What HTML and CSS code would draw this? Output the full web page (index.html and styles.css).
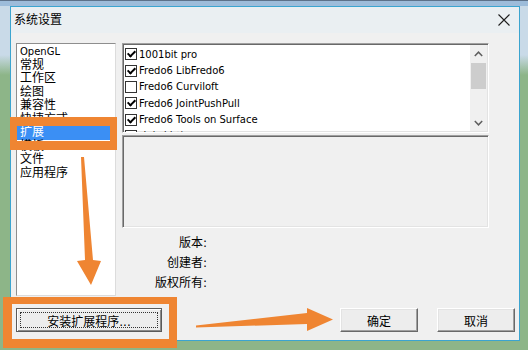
FILE: index.html
```html
<!DOCTYPE html>
<html lang="zh-CN">
<head>
  <meta charset="UTF-8">
  <title>系统设置</title>
  <link rel="stylesheet" href="styles.css">
</head>
<body>
  <div class="dialog">
    <div class="titlebar">
      <span class="title">系统设置</span>
      <svg class="close" width="12" height="12" viewBox="0 0 12 12"><path d="M0.5 0.5L11.5 11.5M11.5 0.5L0.5 11.5" stroke="#1e1e1e" stroke-width="1.1" fill="none"/></svg>
    </div>

    <div class="content">
      <div class="main">
        <ul class="pages">
          <li class="lat">OpenGL</li>
          <li>常规</li>
          <li>工作区</li>
          <li>绘图</li>
          <li>兼容性</li>
          <li>快捷方式</li>
          <li class="sel">扩展</li>
          <li>模板</li>
          <li>文件</li>
          <li>应用程序</li>
        </ul>

        <div class="right">
          <div class="extlist">
            <ul class="items">
              <li><span class="cb on"></span>1001bit pro</li>
              <li><span class="cb on"></span>Fredo6 LibFredo6</li>
              <li><span class="cb"></span>Fredo6 Curviloft</li>
              <li><span class="cb on"></span>Fredo6 JointPushPull</li>
              <li><span class="cb on"></span>Fredo6 Tools on Surface</li>
              <li><span class="cb on"></span>高级镜头工具</li>
            </ul>
            <div class="scroll">
              <div class="sbtn"><svg width="9" height="6" viewBox="0 0 9 6"><path d="M0.8 5L4.5 1.2L8.2 5" stroke="#5f5f5f" stroke-width="1.5" fill="none"/></svg></div>
              <div class="track"><div class="thumb"></div></div>
              <div class="sbtn"><svg width="9" height="6" viewBox="0 0 9 6"><path d="M0.8 1L4.5 4.8L8.2 1" stroke="#5f5f5f" stroke-width="1.5" fill="none"/></svg></div>
            </div>
          </div>

          <div class="details"></div>

          <dl class="info">
            <dt>版本:</dt><dd></dd>
            <dt>创建者:</dt><dd></dd>
            <dt>版权所有:</dt><dd></dd>
          </dl>
        </div>
      </div>

      <div class="footer">
        <button class="btn install"><span>安装扩展程序...</span></button>
        <button class="btn ok">确定</button>
        <button class="btn">取消</button>
      </div>
    </div>
  </div>

  <!-- orange annotations drawn over the screenshot -->
  <svg class="marks" width="528" height="350" viewBox="0 0 528 350">
    <g fill="#ef8532">
      <path fill-rule="evenodd" d="M10 117H117V150H10Z M17 126V141H110V126Z"/>
      <path fill-rule="evenodd" d="M3 297H177V348H3Z M12 304V339H169V304Z"/>
      <polygon points="81,157 84,157 93,260 101,261 91,285 77,261 85,260"/>
      <polygon points="196,325.5 307,313 307,308 333,319.5 307,331 307,324 196,327.5"/>
    </g>
  </svg>
</body>
</html>
```

FILE: styles.css
```css
body {
  margin: 0;
  width: 528px;
  height: 350px;
  overflow: hidden;
  position: relative;
  font-family: "DejaVu Sans", "Noto Sans CJK SC", sans-serif;
  font-size: 12px;
  color: #000;
  background: linear-gradient(#5d7189 0 1px, #9dbcda 1px 6px, #c9dae8 6px 55px, #8db588 75px);
}

.dialog {
  margin: 6px 0 0 10px;
  width: 510px;
  height: 335px;
  box-sizing: border-box;
  border: 1px solid #3ba4cf;
  background: #f0f0f0;
  display: flex;
  flex-direction: column;
}

.titlebar {
  height: 26px;
  flex: none;
  background: #eaeff2;
  display: flex;
  align-items: center;
  justify-content: space-between;
  padding: 0 9px 0 3px;
}
.title { font-size: 12px; line-height: 14px; }

.content {
  flex: 1;
  padding: 10px 4px 8px 5px;
  display: flex;
  flex-direction: column;
}

.main { display: flex; gap: 6px; height: 253px; }

.pages {
  list-style: none;
  margin: 0;
  padding: 1px 0 0;
  width: 100px;
  box-sizing: border-box;
  background: #fff;
  border: 1px solid;
  border-color: #8e8e8e #dcdcdc #dcdcdc #8e8e8e;
  overflow: hidden;
}
.pages li {
  height: 13.5px;
  line-height: 13.5px;
  padding-left: 3px;
  white-space: nowrap;
}
.pages li.lat { font-size: 10px; }
.pages li.sel { background: #3b8ff4; color: #fff; }

.right { width: 367px; display: flex; flex-direction: column; }

.extlist,
.details {
  box-sizing: border-box;
  border: 1px solid;
  border-color: #a0a0a0 #fff #fff #a0a0a0;
  box-shadow: inset 1px 1px #696969, inset -1px -1px #e3e3e3;
}

.extlist {
  height: 90px;
  background: #fff;
  display: flex;
  overflow: hidden;
}

.items {
  list-style: none;
  flex: 1;
  margin: 0;
  padding: 2px 0 0 2px;
  overflow: hidden;
}
.items li {
  height: 16.4px;
  display: flex;
  align-items: center;
  gap: 2px;
  font-size: 10px;
  white-space: nowrap;
}
.items li:last-child { font-size: 12px; }

.cb {
  width: 12px;
  height: 12px;
  flex: none;
  box-sizing: border-box;
  border: 1px solid #333;
  background: #fff;
  position: relative;
}
.cb.on::after {
  content: "";
  position: absolute;
  left: 3px;
  top: 0;
  width: 3px;
  height: 6px;
  border: solid #000;
  border-width: 0 2px 2px 0;
  transform: rotate(45deg);
}

.scroll {
  width: 17px;
  flex: none;
  margin: 1px 1px 1px 0;
  background: #f0f0f0;
  display: flex;
  flex-direction: column;
}
.sbtn { height: 17px; display: flex; align-items: center; justify-content: center; }
.track { flex: 1; padding: 1px 1px 0; }
.thumb { height: 26px; background: #cdcdcd; }

.details { height: 93px; margin-top: 2px; }

.info {
  margin: 5px 0 0;
  display: grid;
  grid-template-columns: 85px 1fr;
  line-height: 20px;
}
.info dt { text-align: right; }
.info dd { margin: 0; }

.footer { margin-top: 12px; display: flex; gap: 19px; }

.btn {
  width: 78px;
  height: 24px;
  padding: 0;
  font-family: inherit;
  font-size: 12px;
  color: #000;
  background: #ededed;
  border: 1px solid;
  border-color: #fff #696969 #696969 #fff;
  box-shadow: inset -1px -1px #a0a0a0, inset 1px 1px #e3e3e3;
}
.ok { margin-left: auto; }

.install {
  width: 146px;
  padding: 3px;
  border-color: #5a5a5a;
  box-shadow: inset 1px 1px #fff, inset -1px -1px #8a8a8a;
}
.install span {
  display: flex;
  height: 100%;
  align-items: center;
  justify-content: center;
  box-sizing: border-box;
  border: 1px dotted #333;
}

.marks { position: absolute; left: 0; top: 0; pointer-events: none; }
```
